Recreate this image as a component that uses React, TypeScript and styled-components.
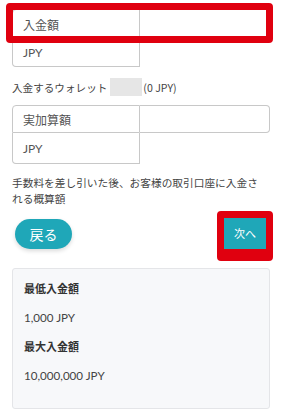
import React from 'react';
import styled, { createGlobalStyle } from 'styled-components';

const Global = createGlobalStyle`
  body {
    margin: 0;
    background: #fff;
    font-family: "Noto Sans CJK JP", "Noto Sans", sans-serif;
    color: #333;
  }
`

const Page = styled.div`
  width: 283px;
  padding: 9px 13px 0 12px;
  box-sizing: border-box;
`

const Field = styled.div<{ $top?: number }>`
  display: grid;
  grid-template-columns: 128px 1fr;
  margin-top: ${p => p.$top ?? 0}px;
`

const Row = styled.div`
  position: relative;
  grid-column: 1 / 3;
  display: grid;
  grid-template-columns: 128px 1fr;
`

const Label = styled.div<{ $h: number }>`
  height: ${p => p.$h}px;
  box-sizing: border-box;
  border: 1px solid #c8c8c8;
  border-radius: 4px 0 0 0;
  padding-left: 10px;
  display: flex;
  align-items: center;
  font-size: 12px;
  color: #555;
`

const Input = styled.div`
  border: 1px solid #c8c8c8;
  border-left: none;
  border-radius: 0 4px 4px 0;
`

const Unit = styled.div<{ $h: number }>`
  height: ${p => p.$h}px;
  box-sizing: border-box;
  border: 1px solid #c8c8c8;
  border-top: none;
  border-radius: 0 0 0 4px;
  padding-left: 10px;
  display: flex;
  align-items: center;
  font-size: 12px;
  color: #555;
  font-family: "Lato", "Noto Sans CJK JP", sans-serif;
`

const Highlight = styled.div<{ $t: number; $r: number; $b: number; $l: number; $bw?: number }>`
  position: absolute;
  top: ${p => p.$t}px;
  right: ${p => p.$r}px;
  bottom: ${p => p.$b}px;
  left: ${p => p.$l}px;
  border: 7px solid #e0000f;
  border-bottom-width: ${p => p.$bw ?? 7}px;
  border-radius: 4px;
  pointer-events: none;
`

const Wallet = styled.div`
  margin-top: 11px;
  display: flex;
  align-items: center;
  font-size: 10.6px;
  height: 18px;
  color: #444;
`

const Blank = styled.span`
  width: 32px;
  height: 18px;
  margin: 0 1px 0 3px;
  background: #e6e6e6;
`

const Note = styled.p`
  margin: 11px 0 0;
  padding-right: 8px;
  font-size: 10.7px;
  line-height: 16px;
  color: #444;
`

const Actions = styled.div`
  display: flex;
  justify-content: space-between;
  align-items: center;
  padding: 0 0 0 3px;
  margin-top: 10px;
  height: 34px;
`

const Back = styled.button`
  width: 57px;
  height: 30px;
  border: none;
  border-radius: 15px;
  background: #1fa7b8;
  color: #fff;
  font-family: inherit;
  font-size: 14px;
  box-shadow: 0 2px 4px rgba(0, 0, 0, 0.15);
  padding: 0;
`

const NextWrap = styled.div`
  position: relative;
  margin-right: 4px;
  margin-top: -2px;
`

const Next = styled.button`
  width: 42px;
  height: 31px;
  border: none;
  background: #1fa7b8;
  color: #fff;
  font-family: inherit;
  font-size: 11px;
  padding: 0;
  display: block;
`

const Info = styled.div`
  margin-top: 17px;
  height: 141px;
  box-sizing: border-box;
  background: #f7f8fa;
  border: 1px solid #e4e5e8;
  border-radius: 3px;
  padding: 11px 11px;
`

const InfoTitle = styled.div<{ $top?: number }>`
  font-size: 11px;
  font-weight: bold;
  color: #333;
  line-height: 16px;
  margin-top: ${p => p.$top ?? 0}px;
`

const InfoValue = styled.div`
  font-size: 11.6px;
  line-height: 16px;
  color: #444;
  margin-top: 14px;
  font-family: "Lato", "Noto Sans CJK JP", sans-serif;
`

function App() {
  return (
    <Page>
      <Global />
      <Field>
        <Row>
          <Label $h={30}>入金額</Label>
          <Input />
          <Highlight $t={-6} $r={-3} $b={-4} $l={-6} />
        </Row>
        <Unit $h={28}>JPY</Unit>
      </Field>

      <Wallet>
        入金するウォレット
        <Blank />
        (0 JPY)
      </Wallet>

      <Field $top={9}>
        <Row>
          <Label $h={28}>実加算額</Label>
          <Input />
        </Row>
        <Unit $h={31}>JPY</Unit>
      </Field>

      <Note>手数料を差し引いた後、お客様の取引口座に入金される概算額</Note>

      <Actions>
        <Back>戻る</Back>
        <NextWrap>
          <Next>次へ</Next>
          <Highlight $t={-7} $r={-7} $b={-12} $l={-7} $bw={12} />
        </NextWrap>
      </Actions>

      <Info>
        <InfoTitle>最低入金額</InfoTitle>
        <InfoValue>1,000 JPY</InfoValue>
        <InfoTitle $top={12}>最大入金額</InfoTitle>
        <InfoValue>10,000,000 JPY</InfoValue>
      </Info>
    </Page>
  );
}

export default App
